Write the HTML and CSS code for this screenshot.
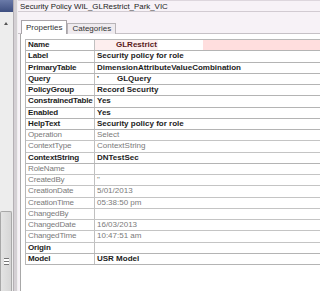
FILE: index.html
```html
<!DOCTYPE html>
<html lang="en">
<head>
  <meta charset="UTF-8" />
  <title>Security Policy WIL_GLRestrict_Park_VIC</title>
  <link rel="stylesheet" href="styles.css">
</head>
<body>
  <div class="screen">
    <div class="side">
      <div class="side-top"></div>
      <div class="side-track">
        <div class="arrow"></div>
        <div class="thumb"><div class="grip"></div></div>
      </div>
    </div>
    <div class="splitter"></div>

    <div class="window">
      <div class="titlebar">Security Policy WIL_GLRestrict_Park_VIC</div>
      <div class="tabstrip">
        <div class="tab active">Properties</div>
        <div class="tab">Categories</div>
      </div>

      <div class="panel">
        <div class="grid">
          <div class="row set"><div class="key">Name</div><div class="val name-val"><span class="gap"></span>GLRestrict</div></div>
          <div class="row set"><div class="key">Label</div><div class="val">Security policy for role</div></div>
          <div class="row set"><div class="key">PrimaryTable</div><div class="val">DimensionAttributeValueCombination</div></div>
          <div class="row set"><div class="key">Query</div><div class="val"><span class="tick">'</span><span class="gap"></span>GLQuery</div></div>
          <div class="row set"><div class="key">PolicyGroup</div><div class="val">Record Security</div></div>
          <div class="row set"><div class="key">ConstrainedTable</div><div class="val">Yes</div></div>
          <div class="row set"><div class="key">Enabled</div><div class="val">Yes</div></div>
          <div class="row set"><div class="key">HelpText</div><div class="val">Security policy for role</div></div>
          <div class="row"><div class="key">Operation</div><div class="val">Select</div></div>
          <div class="row"><div class="key">ContextType</div><div class="val">ContextString</div></div>
          <div class="row set"><div class="key">ContextString</div><div class="val">DNTestSec</div></div>
          <div class="row"><div class="key">RoleName</div><div class="val"></div></div>
          <div class="row"><div class="key">CreatedBy</div><div class="val">"</div></div>
          <div class="row"><div class="key">CreationDate</div><div class="val">5/01/2013</div></div>
          <div class="row"><div class="key">CreationTime</div><div class="val">05:38:50 pm</div></div>
          <div class="row"><div class="key">ChangedBy</div><div class="val"></div></div>
          <div class="row"><div class="key">ChangedDate</div><div class="val">16/03/2013</div></div>
          <div class="row"><div class="key">ChangedTime</div><div class="val">10:47:51 am</div></div>
          <div class="row set"><div class="key">Origin</div><div class="val"></div></div>
          <div class="row set"><div class="key">Model</div><div class="val">USR Model</div></div>
        </div>
      </div>
    </div>
  </div>
</body>
</html>
```

FILE: styles.css
```css
body {
  margin: 0;
  font-family: "Liberation Sans", Arial, sans-serif;
  background: #ffffff;
}
.screen {
  display: flex;
  width: 320px;
  height: 291px;
  overflow: hidden;
}
.side {
  width: 13px;
  display: flex;
  flex-direction: column;
  background: #ededed;
}
.side-top {
  height: 12px;
  background: linear-gradient(#6a7aa8, #3e4f80);
}
.side-track {
  flex: 1;
  display: flex;
  flex-direction: column;
  justify-content: space-between;
}
.arrow {
  margin: 10px 0 0 4px;
  width: 0;
  height: 0;
  border-left: 2.5px solid transparent;
  border-right: 2.5px solid transparent;
  border-bottom: 3px solid #555;
}
.thumb {
  height: 79px;
  margin-right: 1px;
  background: linear-gradient(90deg, #e4e4e4, #d6d6d6);
  border: 1px solid #a8a8a8;
  border-bottom: none;
  border-radius: 2px 2px 0 0;
  display: flex;
  align-items: center;
  justify-content: center;
}
.grip {
  width: 5px;
  height: 5px;
  margin-top: 20px;
  border-top: 1px solid #777;
  border-bottom: 1px solid #777;
  background: linear-gradient(#fff 40%, #777 40%, #777 60%, #fff 60%);
}
.splitter {
  width: 5px;
  background: #d4d0d4;
  border-left: 1px solid #b4b0b4;
  border-right: 1px solid #efefef;
  box-sizing: border-box;
}
.window {
  flex: 1;
  display: flex;
  flex-direction: column;
  background: #f7f2f7;
  min-width: 0;
}
.titlebar {
  height: 12px;
  box-sizing: border-box;
  padding: 1px 0 0 2px;
  font-size: 7.9px;
  color: #222;
  border-top: 1px solid #ddd6dd;
  border-bottom: 1px solid #d2cbd2;
  white-space: nowrap;
}
.tabstrip {
  height: 22px;
  box-sizing: border-box;
  display: flex;
  align-items: flex-end;
  padding-left: 3px;
  border-bottom: 1px solid #c6c1c6;
}
.tab {
  height: 11px;
  box-sizing: border-box;
  padding: 0 4px 0 4px;
  margin-bottom: -1px;
  font-size: 8px;
  color: #333;
  background: #efebef;
  border: 1px solid #b8b4b8;
  border-bottom: none;
  white-space: nowrap;
}
.tab.active {
  height: 14px;
  padding-top: 2px;
  background: #ffffff;
  border-color: #a8a4a8;
  position: relative;
  z-index: 1;
}
.panel {
  flex: 1;
  background: #ffffff;
  margin-left: 2px;
  border-left: 1px solid #a8a8a8;
  padding: 5px 0 0 4px;
}
.grid {
  border-top: 1px solid #b8b8b8;
  border-left: 1px solid #b8b8b8;
}
.row {
  display: flex;
  height: 11.25px;
  box-sizing: border-box;
  border-bottom: 1px solid #c4c4c4;
  font-size: 8px;
  line-height: 10px;
  color: #7a7a7a;
  white-space: nowrap;
}
.row.set {
  font-weight: bold;
  color: #1c1c1c;
  border-bottom-color: #b4b4b4;
}
.key {
  width: 69px;
  flex: none;
  padding-left: 2px;
  box-sizing: border-box;
  border-right: 1px solid #c0c0c0;
  letter-spacing: -0.15px;
  overflow: hidden;
}
.val {
  flex: 1;
  padding-left: 2px;
}
.name-val {
  background: linear-gradient(90deg, #fdeeee 0, #fdeeee 63px, #ffffff 63px, #ffffff 108px, #ffdede 108px);
  color: #5a1a1a;
}
.gap {
  display: inline-block;
  width: 19px;
}
.tick {
  display: inline-block;
  width: 1px;
}
```
